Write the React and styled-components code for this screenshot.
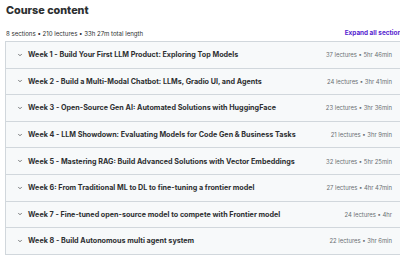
import React from "react";
import styled, { createGlobalStyle } from "styled-components";

const GlobalStyle = createGlobalStyle`
  body {
    margin: 0;
    background: #ffffff;
    overflow: hidden;
    font-family: Inter, "Liberation Sans", sans-serif;
    color: #2d2f31;
  }
`;

const SECTIONS = [
  { title: "Week 1 - Build Your First LLM Product: Exploring Top Models", meta: "37 lectures • 5hr 46min" },
  { title: "Week 2 - Build a Multi-Modal Chatbot: LLMs, Gradio UI, and Agents", meta: "24 lectures • 3hr 41min" },
  { title: "Week 3 - Open-Source Gen AI: Automated Solutions with HuggingFace", meta: "23 lectures • 3hr 36min" },
  { title: "Week 4 - LLM Showdown: Evaluating Models for Code Gen & Business Tasks", meta: "21 lectures • 3hr 9min" },
  { title: "Week 5 - Mastering RAG: Build Advanced Solutions with Vector Embeddings", meta: "32 lectures • 5hr 25min" },
  { title: "Week 6: From Traditional ML to DL to fine-tuning a frontier model", meta: "27 lectures • 4hr 47min" },
  { title: "Week 7 - Fine-tuned open-source model to compete with Frontier model", meta: "24 lectures • 4hr" },
  { title: "Week 8 - Build Autonomous multi agent system", meta: "22 lectures • 3hr 6min" },
];

const Page = styled.div`
  width: 400px;
  padding: 2px 0 0 5px;
`;

const Title = styled.h2`
  margin: 0 0 0 1px;
  font-size: 10.8px;
  font-weight: 800;
  line-height: 17px;
`;

const Header = styled.div`
  display: flex;
  align-items: center;
  justify-content: space-between;
  margin-top: 6px;
  height: 16px;
  padding: 0 0 0 1px;
`;

const Summary = styled.span`
  font-size: 6.1px;
  color: #2d2f31;
`;

const ExpandAll = styled.button`
  border: none;
  background: none;
  padding: 0;
  font-family: inherit;
  font-size: 6.4px;
  font-weight: 700;
  color: #5624d0;
  white-space: nowrap;
`;

const Sections = styled.div`
  border: 1px solid #d1d7dc;
  border-bottom: none;
`;

const Row = styled.div`
  display: flex;
  align-items: center;
  height: 25.6px;
  padding: 0 12px 0 11px;
  background: #f7f9fa;
  border-bottom: 1px solid #d1d7dc;
  box-sizing: content-box;
`;

const Chevron = styled.svg`
  width: 6px;
  height: 6px;
  flex: none;
  margin-right: 5px;
`;

const RowTitle = styled.span`
  flex: 1;
  font-size: 7.2px;
  font-weight: 700;
  white-space: nowrap;
`;

const Meta = styled.span`
  font-size: 5.9px;
  color: #6a6f73;
  white-space: nowrap;
`;

export default function App() {
  return (
    <>
      <GlobalStyle />
      <Page>
        <Title>Course content</Title>
        <Header>
          <Summary>8 sections • 210 lectures • 33h 27m total length</Summary>
          <ExpandAll>Expand all sections</ExpandAll>
        </Header>
        <Sections>
          {SECTIONS.map((s) => (
            <Row key={s.title}>
              <Chevron viewBox="0 0 24 24" fill="none" stroke="#2d2f31" strokeWidth="2.5" strokeLinecap="round" strokeLinejoin="round">
                <path d="M6 9l6 6 6-6" />
              </Chevron>
              <RowTitle>{s.title}</RowTitle>
              <Meta>{s.meta}</Meta>
            </Row>
          ))}
        </Sections>
      </Page>
    </>
  );
}
